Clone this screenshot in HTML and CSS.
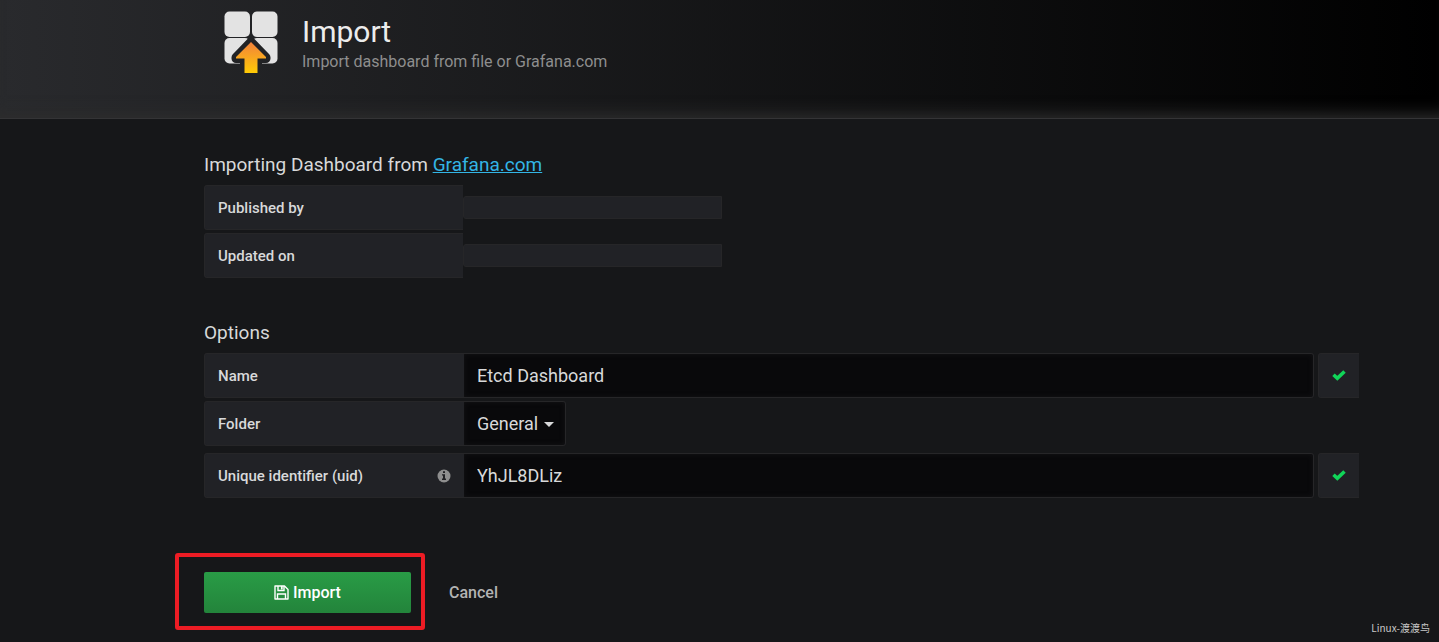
FILE: index.html
```html
<!DOCTYPE html>
<html lang="en">
<head>
  <meta charset="UTF-8">
  <meta name="viewport" content="width=device-width, initial-scale=1.0">
  <title>Import - Grafana</title>
  <link rel="stylesheet" href="styles.css">
</head>
<body>
<header class="page-header">
  <svg class="page-header-icon" width="54" height="64" viewBox="0 0 54 64" aria-hidden="true">
    <defs>
      <linearGradient id="arrowFill" x1="0" y1="0" x2="0" y2="1">
        <stop offset="0" stop-color="#f2813c"/>
        <stop offset="1" stop-color="#ffcb05"/>
      </linearGradient>
      <mask id="arrowGap" maskUnits="userSpaceOnUse" x="0" y="0" width="54" height="64">
        <rect width="54" height="64" fill="#fff"/>
        <path d="M27 31L12 46.500V47.500H20.500V61.500H33.500V47.500H42V46.500Z" fill="#000" stroke="#000" stroke-width="9" stroke-linejoin="round"/>
      </mask>
    </defs>
    <g fill="#e3e3e3" mask="url(#arrowGap)">
      <rect x="0.500" y="0.500" width="25.500" height="25.500" rx="5"/>
      <rect x="28" y="0.500" width="25.500" height="25.500" rx="5"/>
      <rect x="0.500" y="27" width="25.500" height="25.500" rx="5"/>
      <rect x="28" y="27" width="25.500" height="25.500" rx="5"/>
    </g>
    <path d="M27 31L12 46V47.500H20.500V62H33.500V47.500H42V46Z" fill="url(#arrowFill)"/>
  </svg>
  <div class="page-header-text">
    <h1 class="page-header-title">Import</h1>
    <div class="page-header-sub">Import dashboard from file or Grafana.com</div>
  </div>
</header>

<main class="page-body">
  <section class="form-group">
    <h3 class="section-heading">Importing Dashboard from <a class="external-link" href="#">Grafana.com</a></h3>
    <div class="form-inline">
      <span class="form-label form-label-info">Published by</span>
      <span class="form-value"></span>
    </div>
    <div class="form-inline">
      <span class="form-label form-label-info">Updated on</span>
      <span class="form-value"></span>
    </div>
  </section>

  <form id="importForm">
    <section class="form-group">
      <h3 class="section-heading">Options</h3>
      <div class="form-inline">
        <label class="form-label" for="name">Name</label>
        <input class="form-input" type="text" id="name" name="name" value="Etcd Dashboard">
        <span class="form-check">
          <svg width="14" height="11" viewBox="0 0 14 11" aria-hidden="true"><path d="M1.500 4.800L5.300 8.300L12.500 1.500" fill="none" stroke="#10d658" stroke-width="3.600"/></svg>
        </span>
      </div>
      <div class="form-inline form-inline-folder">
        <label class="form-label" for="folder">Folder</label>
        <div class="form-select-wrapper">
          <select class="form-select" id="folder" name="folder">
            <option>General</option>
          </select>
        </div>
      </div>
      <div class="form-inline">
        <label class="form-label" for="uid">Unique identifier (uid)
          <svg class="info-icon" width="14" height="14" viewBox="0 0 14 14" aria-hidden="true">
            <circle cx="7" cy="7" r="6.500" fill="#8e8e8e"/>
            <path d="M6 2.200H8V4H6ZM5 5.200H8V9.600H9V11H5V9.600H6V6.600H5Z" fill="#212124"/>
          </svg>
        </label>
        <input class="form-input" type="text" id="uid" name="uid" value="YhJL8DLiz">
        <span class="form-check">
          <svg width="14" height="11" viewBox="0 0 14 11" aria-hidden="true"><path d="M1.500 4.800L5.300 8.300L12.500 1.500" fill="none" stroke="#10d658" stroke-width="3.600"/></svg>
        </span>
      </div>
    </section>

    <div class="form-buttons">
      <div class="highlight">
        <button class="btn-import" type="submit">
          <svg width="15" height="15" viewBox="0 0 15 15" fill="none" stroke="#fff" stroke-width="1.400" aria-hidden="true">
            <path d="M1 1H10.500L14 4.500V14H1Z" stroke-linejoin="round"/>
            <path d="M4 1V5.500H10V1M3.500 14V9H11.500V14"/>
            <path d="M7.800 1V4.500" stroke-width="1.800"/>
          </svg>
          Import
        </button>
      </div>
      <a class="btn-cancel" href="#">Cancel</a>
    </div>
  </form>
</main>
<div class="watermark">Linux-渡渡鸟</div>
</body>
</html>
```
FILE: styles.css
```css
* {
  box-sizing: border-box;
}
body {
  margin: 0;
  min-height: 100vh;
  position: relative;
  background: #161719;
  color: #d8d9da;
  font-family: Roboto, "Noto Sans CJK SC", sans-serif;
  font-size: 15px;
}
.page-header {
  display: flex;
  gap: 24px;
  height: 119px;
  padding: 11px 80px 0 224px;
  background: linear-gradient(90deg, #292a2d, #000);
  box-shadow: inset 0 -16px 16px -12px #2d2d2d;
  border-bottom: 1px solid #343436;
}
.page-header-icon {
  flex: none;
}
.page-header-title {
  margin: 0;
  font-size: 30px;
  font-weight: 400;
  line-height: 41px;
  color: #ececec;
}
.page-header-sub {
  font-size: 16px;
  line-height: 20px;
  color: #8e8e8e;
}
.page-body {
  padding: 33px 80px 24px 204px;
}
.form-group {
  margin-bottom: 42px;
}
.section-heading {
  margin: 0 0 7px;
  font-size: 19px;
  font-weight: 400;
  line-height: 26px;
}
.external-link {
  color: #33b5e5;
}
.form-inline {
  display: flex;
  align-items: center;
  margin-bottom: 3px;
}
.form-inline-folder {
  margin-bottom: 7px;
}
.form-label {
  display: flex;
  align-items: center;
  justify-content: space-between;
  flex: none;
  width: 260px;
  height: 45px;
  padding: 0 13px;
  background: #212226;
  border: 1px solid #262628;
  border-right: none;
  border-radius: 3px 0 0 3px;
  font-weight: 500;
}
.form-label-info {
  width: 259px;
}
.form-value {
  width: 259px;
  height: 23px;
  background: #212226;
  border: 1px solid #262628;
  border-radius: 3px 0 0 3px;
}
.form-input,
.form-select {
  height: 45px;
  background: #09090b;
  border: 1px solid #262628;
  border-left: none;
  border-radius: 0 3px 3px 0;
  box-shadow: inset 0 0 5px #141416;
  color: #d8d9da;
  font-family: inherit;
  font-size: 18px;
}
.form-input {
  flex: 1;
  min-width: 0;
  padding: 0 13px;
}
.form-check {
  display: flex;
  align-items: center;
  justify-content: center;
  flex: none;
  width: 41px;
  height: 45px;
  margin-left: 4px;
  background: #212226;
  border: 1px solid #262628;
  border-right: none;
  border-radius: 3px 0 0 3px;
}
.form-select-wrapper {
  position: relative;
}
.form-select {
  appearance: none;
  padding: 0 26px 0 13px;
}
.form-select-wrapper::after {
  content: "";
  position: absolute;
  top: 21px;
  right: 12px;
  border: 5px solid transparent;
  border-top-color: #d8d9da;
  border-bottom: none;
  pointer-events: none;
}
.form-buttons {
  display: flex;
  align-items: center;
  gap: 38px;
  padding-top: 32px;
}
.highlight {
  position: relative;
}
.highlight::after {
  content: "";
  position: absolute;
  top: -19px;
  right: -14px;
  bottom: -17px;
  left: -29px;
  border: 4px solid #ed1c24;
  border-radius: 3px;
  pointer-events: none;
}
.btn-import {
  display: flex;
  align-items: center;
  justify-content: center;
  gap: 4px;
  width: 207px;
  height: 41px;
  border: none;
  border-radius: 2px;
  background: linear-gradient(#299c46, #23843b);
  color: #fff;
  font-family: inherit;
  font-size: 16px;
  font-weight: 500;
  cursor: pointer;
}
.btn-cancel {
  color: #b3b3b3;
  font-size: 16px;
  font-weight: 500;
  text-decoration: none;
}
.watermark {
  position: absolute;
  right: 9px;
  bottom: 7px;
  color: #c8c8c8;
  font-family: "Noto Sans CJK SC", sans-serif;
  font-size: 10px;
  line-height: 14px;
}
```
